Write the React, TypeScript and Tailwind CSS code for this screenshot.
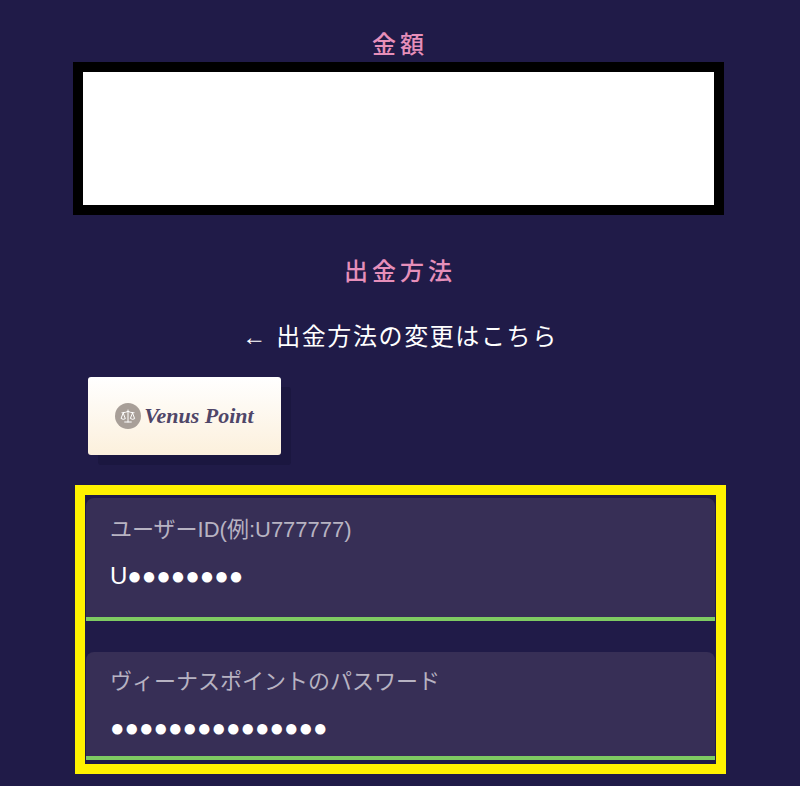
import { Scale } from "lucide-react";

const jp = "font-['Liberation_Sans','Noto_Sans_CJK_JP',sans-serif]";

function Field({ label, value, top, height, mt }: { label: string; value: string; top: string; height: string; mt: string }) {
  return (
    <div className={`${mt} ${height} mx-px w-[629px] rounded-t-[8px] border-b-4 border-[#7ecb62] bg-[#372f56] pl-[24px] ${top}`}>
      <div className="text-[22px] leading-[32px] text-[#b7b3c2]">{label}</div>
      <div className="mt-[14px] flex h-[32px] items-center text-[24px] leading-[32px] text-white">{value}</div>
    </div>
  );
}

export default function App() {
  return (
    <div className={`${jp} h-[786px] w-[800px] overflow-hidden bg-[#201b48] pt-[28px]`}>
      <h2 className="h-[34px] text-center text-[24px] font-medium leading-[34px] tracking-[4px] text-[#e68fba]">金額</h2>
      <div className="ml-[73px] h-[153px] w-[651px] border-[10px] border-black bg-white" />
      <h2 className="mt-[40px] h-[34px] text-center text-[24px] font-medium leading-[34px] tracking-[4px] text-[#e68fba]">出金方法</h2>
      <div className="mt-[31px] h-[34px] text-center text-[24px] leading-[34px] tracking-[1.6px] text-white">← 出金方法の変更はこちら</div>
      <div className="ml-[88px] mt-[23px] flex h-[78px] w-[193px] items-center justify-center gap-[3px] rounded-[3px] bg-gradient-to-b from-white to-[#fcf0dc] shadow-[10px_10px_0_#1b1740]">
        <span className="flex h-[26px] w-[26px] items-center justify-center rounded-full bg-[#a89f98]">
          <Scale size={16} color="#ffffff" strokeWidth={1.5} />
        </span>
        <span className="font-['Liberation_Serif',serif] text-[22px] font-bold italic leading-none text-[#4f4668]">Venus Point</span>
      </div>
      <div className="ml-[75px] mt-[30px] h-[289px] w-[651px] border-[10px] border-[#fff200] pt-[3px]">
        <Field label="ユーザーID(例:U777777)" value="U●●●●●●●●" top="pt-[16px]" height="h-[123px]" mt="mt-0" />
        <Field label="ヴィーナスポイントのパスワード" value="●●●●●●●●●●●●●●●" top="pt-[14px]" height="h-[108px]" mt="mt-[31px]" />
      </div>
    </div>
  );
}
